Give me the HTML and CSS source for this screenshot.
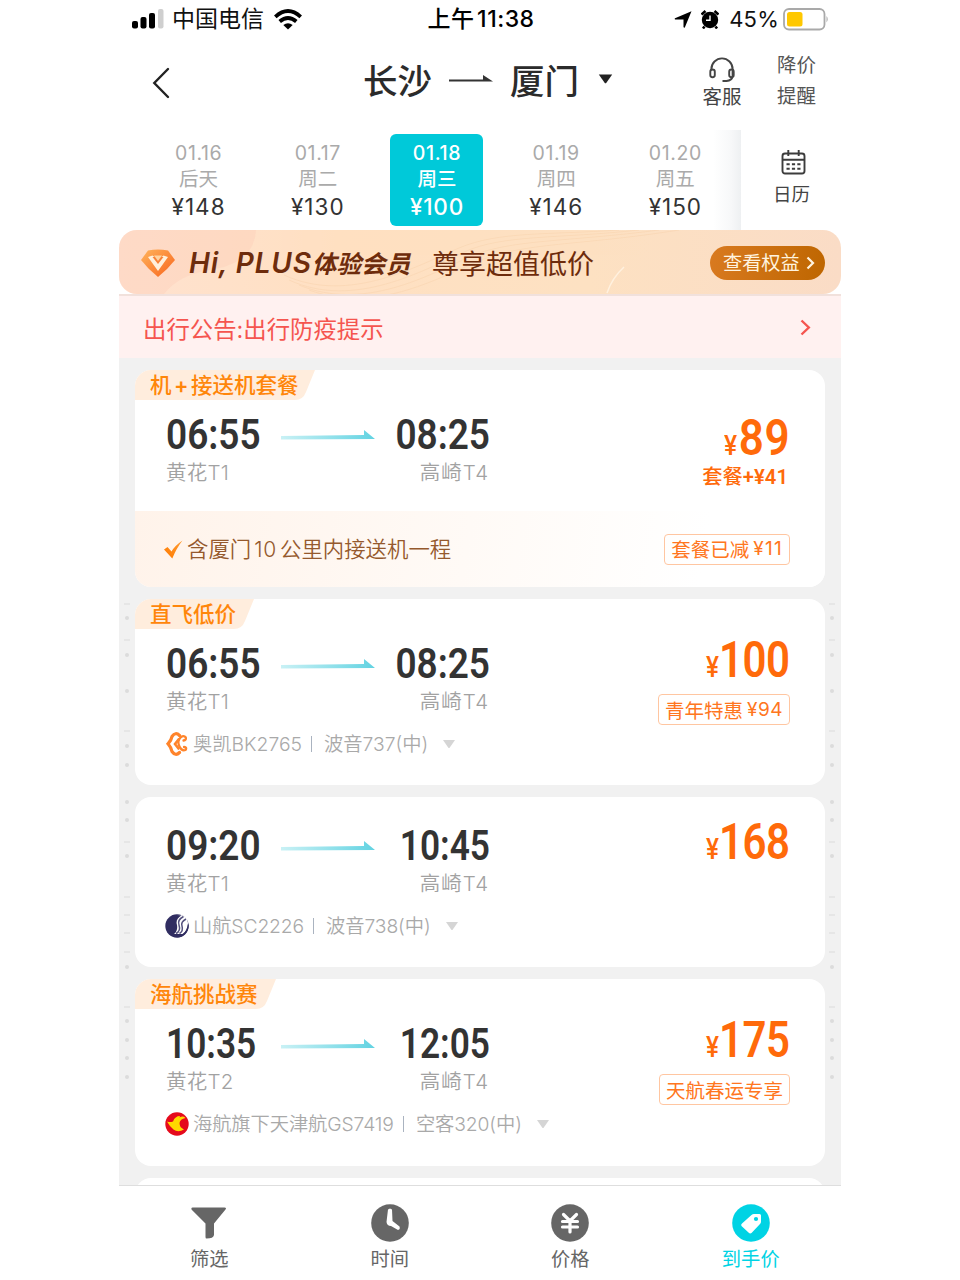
FILE: index.html
```html
<!DOCTYPE html>
<html lang="zh-CN">
<head>
<meta charset="utf-8">
<title>长沙 - 厦门</title>
<link rel="stylesheet" href="styles.css">
</head>
<body>
<svg class="defs" width="0" height="0">
  <defs>
    <linearGradient id="fly" x1="0" x2="1" y1="0" y2="0"><stop offset="0" stop-color="#c9f1f5"/><stop offset="1" stop-color="#62d3e2"/></linearGradient>
    <linearGradient id="gem" x1="0" x2="1" y1="0" y2="1"><stop offset="0" stop-color="#ffb45c"/><stop offset="1" stop-color="#f8641c"/></linearGradient>
    <linearGradient id="tick" x1="0" x2="1" y1="1" y2="0"><stop offset="0" stop-color="#ff7a00"/><stop offset="1" stop-color="#ff9c33"/></linearGradient>
    <symbol id="arrow" viewBox="0 0 94 12"><path d="M0 7 83 6V1L94 10 0 10.500Z" fill="url(#fly)"/></symbol>
    <symbol id="down" viewBox="0 0 12 9"><path d="M0 0H12L6.8 7.6Q6 8.6 5.2 7.6Z" fill="#d5d5d5"/></symbol>
  </defs>
</svg>
<div class="phone">
  <header class="status">
    <div class="status-left">
      <svg width="32" height="20" viewBox="0 0 32 20"><rect x="0" y="12" width="6" height="7.500" rx="2"/><rect x="8.500" y="8" width="6" height="11.500" rx="2"/><rect x="17" y="4" width="6" height="15.500" rx="2"/><rect x="26" y="0" width="5.500" height="19.500" rx="2" fill="#cfcfcf"/></svg>
      <span class="carrier">中国电信</span>
      <svg width="28" height="21" viewBox="0 0 28 21"><g fill="none" stroke="#000" stroke-width="3.800"><path d="M1.300 7.800Q14-3.700 26.700 7.800"/><path d="M5.700 12.500Q14 5.400 22.300 12.500"/></g><path d="M14 20.500 9.300 16Q14 12.600 18.700 16Z"/></svg>
    </div>
    <div class="clock">上午 11:38</div>
    <div class="status-right">
      <svg width="18" height="17" viewBox="0 0 18 17"><path d="M17.500.3 10.800 16.500Q10 17 9.500 16V8.500H1.200Q0 8 1 7.200Z"/></svg>
      <svg class="alarm" width="18" height="19" viewBox="0 0 18 19"><circle cx="9" cy="10" r="8.200"/><path d="M.5 4.500 4.500 1M17.500 4.500 13.500 1M3.500 16.500 2 18.500M14.500 16.500 16 18.500" stroke="#000" stroke-width="2.600"/><path d="M9 5.500V10.300H5" fill="none" stroke="#fff" stroke-width="1.400"/></svg>
      <span class="percent">45%</span>
      <svg width="47" height="23" viewBox="0 0 47 23"><rect x="1" y="1" width="40.500" height="20.500" rx="5" fill="#fff" stroke="#a9a9a9" stroke-width="1.800"/><rect x="4" y="4" width="15.500" height="14.500" rx="2.500" fill="#ffc800"/><path d="M43.500 8Q46 11.200 43.500 14.500Z" fill="#a9a9a9"/></svg>
    </div>
  </header>

  <nav class="nav">
    <svg class="back" width="18" height="32" viewBox="0 0 18 32"><path d="M16 2 2.300 16 16 30" fill="none" stroke="#222" stroke-width="2.400" stroke-linecap="round"/></svg>
    <div class="title">
      <span>长沙</span>
      <svg class="to" width="44" height="12" viewBox="0 0 44 12"><path d="M0 5.500H34V1L44 7.500H0Z" fill="#333"/></svg>
      <span>厦门</span>
      <svg class="caret" width="15" height="10" viewBox="0 0 15 10"><path d="M.8.500H14.200L8.400 8.700Q7.500 9.800 6.600 8.700Z" fill="#222"/></svg>
    </div>
    <div class="service">
      <svg width="28" height="27" viewBox="0 0 28 27"><g fill="none" stroke="#444" stroke-width="1.900"><path d="M3.400 14.500V13A10.600 10.600 0 0 1 24.600 13V20Q24 24.500 18.500 25H14.500"/><rect x="2.300" y="13.500" width="4.500" height="7.700" rx="2.200"/><rect x="21.200" y="13.500" width="4.500" height="7.700" rx="2.200"/></g></svg>
      <span>客服</span>
    </div>
    <div class="alert"><span>降价</span><span>提醒</span></div>
  </nav>

  <section class="dates">
    <div class="days">
      <div class="day"><span class="d">01.16</span><span class="w">后天</span><span class="p">¥148</span></div>
      <div class="day"><span class="d">01.17</span><span class="w">周二</span><span class="p">¥130</span></div>
      <div class="day active"><span class="d">01.18</span><span class="w">周三</span><span class="p">¥100</span></div>
      <div class="day"><span class="d">01.19</span><span class="w">周四</span><span class="p">¥146</span></div>
      <div class="day"><span class="d">01.20</span><span class="w">周五</span><span class="p">¥150</span></div>
    </div>
    <div class="calendar">
      <svg width="25" height="25" viewBox="0 0 25 25"><g fill="none" stroke="#3c3c3c" stroke-width="1.900"><rect x="1.500" y="3.500" width="22" height="20" rx="2.500"/><path d="M1.500 9.800H23.500M7.300 0V6M17.700 0V6"/><path d="M5.500 14.200H19.500M5.500 18.800H19.500" stroke-dasharray="3.200 2.200"/></g></svg>
      <span>日历</span>
    </div>
  </section>

  <section class="plus">
    <svg class="waves" width="722" height="64" viewBox="0 0 722 64"><path d="M0 0H137Q135 32 96 39Q60 44 45 64H0Z" fill="#fbc8b4" opacity=".3"/><g fill="none" stroke="#f6cda4" stroke-width=".8" opacity=".45"><path d="M165 45C230 75 300 35 340 18S430 5 500 0"/><path d="M170 50C235 80 305 40 345 22S440 9 520 0"/><path d="M180 55C245 82 310 45 350 27S450 12 540 0"/><path d="M190 60C255 84 315 50 360 31S460 16 560 0"/></g><path d="M488 63Q493 48 505 37" fill="none" stroke="#fff1df" stroke-width="1.500"/></svg>
    <svg class="gem" width="36" height="30" viewBox="0 0 36 30"><path d="M8 1.500Q18-.5 28 1.500L35 11Q28 20 18 28Q8 20 1 11Z" fill="url(#gem)"/><path d="M8 8 12.500 6.500 18 11 23.500 6.500 28 8 18 22Z" fill="#fff0dc"/><path d="M12.500 8H23.500L18 15Z" fill="#f98238"/><path d="M14 6.500H22L18 12Z" fill="#ffd3a0"/></svg>
    <span class="plus-name">Hi, PLUS<b>体验会员</b></span>
    <span class="plus-slogan">尊享超值低价</span>
    <span class="plus-btn">查看权益<svg width="9" height="14" viewBox="0 0 9 14"><path d="M1.500 1.500 7 7 1.500 12.500" fill="none" stroke="#fff3df" stroke-width="2.200"/></svg></span>
  </section>

  <section class="notice">
    <span>出行公告:出行防疫提示</span>
    <svg width="11" height="17" viewBox="0 0 11 17"><path d="M1.500 1.500 8.800 8.500 1.500 15.500" fill="none" stroke="#f5554f" stroke-width="2.400"/></svg>
  </section>

  <main class="list">
    <svg class="specks left" width="6" height="490" viewBox="0 0 6 490"><g stroke="#dcdcdc"><path d="M0 4H6M0 40H6M0 131H6M0 242H6M0 297H6M0 315H6M0 333H6M0 352H6M0 407H6" stroke-width="1.200"/><path d="M3 18v.1M3 55v.1M3 91v.1M3 146v.1M3 165v.1M3 202v.1M3 220v.1M3 256v.1M3 367v.1M3 421v.1M3 440v.1M3 458v.1M3 477v.1" stroke-width="4" stroke-linecap="round"/></g></svg>
    <svg class="specks right" width="6" height="490" viewBox="0 0 6 490"><g stroke="#dcdcdc"><path d="M0 4H6M0 40H6M0 131H6M0 242H6M0 297H6M0 315H6M0 333H6M0 352H6M0 407H6" stroke-width="1.200"/><path d="M3 18v.1M3 55v.1M3 91v.1M3 146v.1M3 165v.1M3 202v.1M3 220v.1M3 256v.1M3 367v.1M3 421v.1M3 440v.1M3 458v.1M3 477v.1" stroke-width="4" stroke-linecap="round"/></g></svg>

    <article class="card package">
      <div class="tag"><svg width="180" height="30" viewBox="0 0 180 30"><path d="M0 0H180L171 22Q168 30 160 30H0Z" fill="#ffeddd"/></svg><span>机<i>+</i>接送机套餐</span></div>
      <div class="body">
        <div class="route">
          <span class="time">06:55</span><svg class="fly"><use href="#arrow"/></svg><span class="time end">08:25</span>
          <span class="port">黄花T1</span><span class="port end">高崎T4</span>
        </div>
        <div class="fare"><div class="price"><i>¥</i><b>89</b></div><div class="extra">套餐<em>+¥41</em></div></div>
      </div>
      <div class="perk">
        <svg width="19" height="19" viewBox="0 0 19 19"><path d="M0 9.500 3.500 7 7.500 11.500Q11 5.500 18.500.5 12.500 8 8.300 18.500Z" fill="url(#tick)"/></svg>
        <span class="perk-text">含厦门<em>10</em>公里内接送机一程</span>
        <span class="badge">套餐已减<em>¥11</em></span>
      </div>
    </article>

    <article class="card direct">
      <div class="tag"><svg width="119" height="30" viewBox="0 0 119 30"><path d="M0 0H119L110 22Q107 30 99 30H0Z" fill="#ffeddd"/></svg><span>直飞低价</span></div>
      <div class="body">
        <div class="route">
          <span class="time">06:55</span><svg class="fly"><use href="#arrow"/></svg><span class="time end">08:25</span>
          <span class="port">黄花T1</span><span class="port end">高崎T4</span>
        </div>
        <div class="fare"><div class="price hundreds"><i>¥</i><b>100</b></div><div class="badge">青年特惠<em>¥94</em></div></div>
      </div>
      <div class="airline">
        <svg width="24" height="24" viewBox="0 0 24 24"><g fill="none" stroke="#ff842b" stroke-width="3.200" stroke-linecap="round"><path d="M14.500 3.500Q10.500-.5 7 4.500Q6.500 8 3 11.800Q6.500 16 7 19.500Q10.500 24.500 14.500 20.500"/><path d="M13.500 7.500 10 12 13.500 16.500" stroke-width="2.600"/><path d="M18.500 8.500Q21.500 8 20.800 5.500Q19 3 16 5Q12 9 14 13.500Q16.500 19.500 20.500 18Q22.500 15.500 19 15" stroke-width="2.300"/></g></svg>
        <span>奥凯BK2765</span><i class="bar"></i><span>波音737(中)</span><svg class="more" width="12" height="9"><use href="#down"/></svg>
      </div>
    </article>

    <article class="card plain">
      <div class="body">
        <div class="route">
          <span class="time">09:20</span><svg class="fly"><use href="#arrow"/></svg><span class="time end slim">10:45</span>
          <span class="port">黄花T1</span><span class="port end">高崎T4</span>
        </div>
        <div class="fare"><div class="price hundreds"><i>¥</i><b>168</b></div></div>
      </div>
      <div class="airline">
        <svg width="24" height="24" viewBox="0 0 24 24"><circle cx="12" cy="12" r="11.700" fill="#302d61"/><path d="M12 1.500Q18-.5 22 5L23 9Q22.500 17 17.500 20H9Q13 17 12 11Q10 5 17 1Z" fill="#fff"/><g fill="none" stroke="#55527e" stroke-width="1.500"><path d="M18.500 2.500Q12 6 14 11Q16 17 11 19.500M21 5Q15.500 8 17 12Q18.500 17 14.500 19.500"/></g><path d="M23 10Q22 17 17.500 20.500H8V22Q12 24 17 22.500Q24 18 23.700 11Z" fill="#302d61"/></svg>
        <span>山航SC2226</span><i class="bar"></i><span>波音738(中)</span><svg class="more" width="12" height="9"><use href="#down"/></svg>
      </div>
    </article>

    <article class="card hainan">
      <div class="tag"><svg width="141" height="30" viewBox="0 0 141 30"><path d="M0 0H141L132 22Q129 30 121 30H0Z" fill="#ffeddd"/></svg><span>海航挑战赛</span></div>
      <div class="body">
        <div class="route">
          <span class="time slim">10:35</span><svg class="fly"><use href="#arrow"/></svg><span class="time end slim">12:05</span>
          <span class="port">黄花T2</span><span class="port end">高崎T4</span>
        </div>
        <div class="fare"><div class="price hundreds"><i>¥</i><b>175</b></div><div class="badge">天航春运专享</div></div>
      </div>
      <div class="airline">
        <svg width="24" height="24" viewBox="0 0 24 24"><circle cx="12" cy="12" r="11.700" fill="#e50a1c"/><path d="M2 9.500Q5 10.500 8 9.500Q10 4 15 4L14.500 5.500Q18 3.500 20.500 6Q15 7 14.500 11Q14.500 15.500 19 17.500Q13 21 8.500 17.500Q5 15 2 9.500Z" fill="#ffd900"/><circle cx="19" cy="12" r="3.800" fill="#e50a1c"/></svg>
        <span>海航旗下天津航GS7419</span><i class="bar"></i><span>空客320(中)</span><svg class="more" width="12" height="9"><use href="#down"/></svg>
      </div>
    </article>

    <article class="card next"></article>
  </main>

  <footer class="tabs">
    <div class="tab"><svg width="38" height="38" viewBox="0 0 38 38"><path d="M2.500 3.500H34.500Q36.800 3.500 35.500 5.500L24 19.500V31Q23.500 34.500 16.500 34.500Q15.500 34.500 15.500 33V19.500L1.500 5.500Q.8 3.500 2.500 3.500Z" fill="#666"/></svg><span>筛选</span></div>
    <div class="tab"><svg width="38" height="38" viewBox="0 0 38 38"><circle cx="19" cy="19" r="18.800" fill="#666"/><path d="M19 4.500 21 5.500 21.500 17 28.500 22.500Q29.500 25.500 27 26L20 22Q16 22 15.500 18L17 5.500Z" fill="#fff"/></svg><span>时间</span></div>
    <div class="tab"><svg width="38" height="38" viewBox="0 0 38 38"><circle cx="19" cy="19" r="18.800" fill="#666"/><path d="M12.500 10.500 19 17 25.500 10.500M11.500 17.500H26.500M11.500 23H26.500M19 17V28" fill="none" stroke="#fff" stroke-width="3.200" stroke-linecap="round"/></svg><span>价格</span></div>
    <div class="tab on"><svg width="38" height="38" viewBox="0 0 38 38"><circle cx="19" cy="19" r="18.800" fill="#00d3e4"/><path d="M19.500 11Q20.500 10 22 10H27.500Q29 10 29 11.500V17.500Q29 19 28 20L19.500 29Q18 30 16.500 28.500L9.500 22Q8.500 20.500 10 19.500Z" fill="#fff"/><circle cx="24" cy="15" r="2.100" fill="#00d3e4"/></svg><span>到手价</span></div>
  </footer>
</div>
</body>
</html>
```
FILE: styles.css
```css
* { box-sizing: border-box; }
body {
  margin: 0;
  height: 1280px;
  overflow: hidden;
  background: #fff;
  font-family: Inter, "Noto Sans CJK SC", sans-serif;
  color: #333;
}
i, em { font-style: normal; }
svg { display: block; flex: none; }
.defs { position: absolute; }
.phone { width: 722px; height: 1280px; margin-left: 119px; display: flex; flex-direction: column; }
.phone span { white-space: nowrap; }

.status { display: grid; grid-template-columns: 1fr auto 1fr; height: 38px; padding: 0 11px 0 13px; color: #111; line-height: 38px; }
.status-left, .status-right { display: flex; align-items: center; }
.status-right { justify-content: flex-end; }
.carrier { margin: 0 10px 0 8px; font-size: 23px; }
.clock { font-size: 23px; font-weight: 500; letter-spacing: .5px; word-spacing: -4px; color: #000; }
.alarm { margin: 0 10px 0 9px; }
.percent { margin-right: 4px; font-size: 22px; letter-spacing: .2px; }

.nav { display: flex; height: 92px; align-items: flex-start; }
.back { margin: 29px 0 0 33px; }
.title { display: flex; align-items: center; height: 82px; margin-left: 193px; font-size: 34.500px; font-weight: 500; color: #2b2b2b; }
.title .to { margin: 2px 17px 0 17px; }
.title .caret { margin: -1px 0 0 19px; }
.service { display: flex; flex-direction: column; align-items: center; width: 40px; margin: 18px 0 0 89px; font-size: 19.500px; line-height: 28px; color: #444; }
.alert { display: flex; flex-direction: column; width: 40px; margin: 12px 0 0 35px; font-size: 19.500px; line-height: 31px; color: #555; }

.dates { display: flex; height: 100px; }
.days { display: grid; grid-template-columns: repeat(5, 119.2px); width: 622px; padding: 4px 0 0 20px; background: linear-gradient(90deg, transparent 594px, #f7f8f9 612px, #eef0f2 622px); }
.day { display: flex; flex-direction: column; align-items: center; justify-self: center; width: 93px; height: 92px; padding-top: 6px; border-radius: 6px; color: #aaa; }
.d { font-size: 19.500px; line-height: 26px; letter-spacing: .6px; }
.w { font-size: 19.500px; line-height: 26px; }
.p { font-size: 22.500px; line-height: 30px; letter-spacing: 1px; color: #333; }
.active { background: #00c9d9; color: #fff; }
.active .d, .active .w, .active .p { color: #fff; font-weight: 500; }
.active .p { letter-spacing: .8px; }
.calendar { display: flex; flex-direction: column; align-items: center; width: 100px; padding: 20px 0 0 4px; font-size: 18.500px; line-height: 28px; color: #444; }
.calendar span { margin: 5px 3px 0 0; }

.plus { position: relative; display: flex; align-items: center; height: 64px; padding: 1px 16px 0 21px; border-radius: 18px; background: linear-gradient(90deg, #ffe2d0, #ffe0c2 30%, #fde1c2 65%, #fadcc6); overflow: hidden; color: #6e2c0c; }
.waves { position: absolute; left: 0; top: 0; }
.gem { position: relative; margin-top: 2px; }
.plus-name { position: relative; margin-left: 13px; width: 225px; font-size: 28px; font-weight: 600; font-style: italic; letter-spacing: .8px; }
.plus-name b { font-size: 24.500px; font-weight: 700; letter-spacing: .2px; }
.plus-slogan { position: relative; margin-left: 18px; font-size: 27px; }
.plus-btn { position: relative; display: flex; align-items: center; gap: 6px; width: 115px; height: 34px; margin-left: auto; padding-left: 13px; border-radius: 17px; background: linear-gradient(100deg, #d97a20, #be6600); color: #fff3df; font-size: 19.200px; line-height: 34px; }

.notice { display: flex; align-items: center; justify-content: space-between; height: 64px; padding: 1px 30px 0 24px; border-top: 2px solid #f1e1dc; background: #fff1f0; color: #f5554f; font-size: 23.400px; }

.list { position: relative; display: flex; flex-direction: column; flex: 1; min-height: 0; overflow: hidden; padding: 12px 16px 0; background: #f1f1f1; }
.specks { position: absolute; top: 242px; }
.specks.left { left: 5px; }
.specks.right { right: 6px; }
.card { flex: none; margin-bottom: 12px; border-radius: 16px; background: #fff; overflow: hidden; }
.package { height: 217px; margin-bottom: 12px; }
.direct { height: 186px; }
.plain { height: 170px; padding-top: 28px; }
.hainan { height: 187px; }
.next { height: 60px; }
.tag { display: grid; height: 30px; font-size: 21.500px; font-weight: 500; line-height: 30px; color: #ff860a; }
.tag > * { grid-area: 1 / 1; }
.tag span { padding-left: 15px; }
.tag i { margin: 0 2.500px; font-weight: 600; }
.body { display: flex; justify-content: space-between; height: 95px; padding: 14px 35px 0 31px; }
.plain .body { padding-top: 0; height: 81px; }
.route { display: grid; grid-template-columns: 115px 94px 115px; grid-template-rows: 40px 36px; align-items: center; height: 76px; }
.time { display: inline-block; font-family: Roboto, sans-serif; font-size: 43px; font-weight: 600; line-height: 40px; color: #333; transform: scaleX(.86); transform-origin: left; }
.time.end { justify-self: end; transform-origin: right; }
.time.slim { transform: scaleX(.82); }
.fly { width: 94px; height: 12px; margin-top: 1px; }
.port { font-size: 20.500px; line-height: 36px; font-weight: 350; letter-spacing: .2px; color: #a2a2a2; padding-top: 1px; }
.port.end { grid-column: 3; justify-self: end; padding-right: 1px; letter-spacing: .9px; }
.fare { display: flex; flex-direction: column; align-items: flex-end; margin-top: -3px; }
.package .fare { margin-top: 4px; }
.price { display: flex; align-items: baseline; height: 40px; font-family: Roboto, sans-serif; line-height: 40px; color: #ff6a0a; transform: scaleX(.88); transform-origin: right; }
.price i { margin-right: 2px; font-size: 28px; font-weight: 500; }
.price b { font-size: 50px; font-weight: 600; letter-spacing: .5px; }
.hundreds { transform: scaleX(.84); }
.hundreds i { margin-right: 0; font-size: 29px; }
.hundreds b { letter-spacing: -.5px; }
.extra { margin-top: 3px; font-size: 20.300px; font-weight: 500; line-height: 32px; color: #ff6a0a; letter-spacing: 0; padding-right: 2px; }
.extra em { font-family: Roboto, sans-serif; font-weight: 600; }
.badge { display: flex; align-items: center; height: 31px; padding: 0 6px 1px; border: 1.500px solid #ffc6a1; border-radius: 4px; color: #ff7620; font-size: 19.500px; white-space: nowrap; }
.fare .badge { margin-top: 14px; }
.badge em { margin-left: 4px; font-size: 19px; letter-spacing: .5px; }
.perk .badge em { letter-spacing: 1.300px; }
.perk { display: flex; align-items: center; height: 76px; margin-top: 16px; padding: 0 35px 0 29px; background: linear-gradient(100deg, #fff3ea, #fffaf6 48%, #fff 82%); color: #95592d; font-size: 21.400px; }
.perk-text { margin: -4px 0 0 4px; font-weight: 350; }
.perk-text em { margin: 0 3px; font-size: 21px; letter-spacing: .8px; }
.perk .badge { margin-left: auto; }
.airline { display: flex; align-items: center; height: 24px; margin: 8px 0 0 30px; font-size: 19.300px; font-weight: 350; line-height: 24px; color: #a9a9a9; }
.airline span { margin-top: -1px; }
.airline span:first-of-type { margin-left: 4px; }
.bar { width: 1px; height: 16px; margin: 0 12px 0 9px; background: #aab3c0; }
.more { margin-left: 15px; }
.plain .airline { letter-spacing: -.1px; }
.hainan .airline { letter-spacing: -.1px; }

.tabs { display: grid; grid-template-columns: repeat(4, 1fr); height: 95px; border-top: 1.500px solid #dedede; background: #fff; }
.tab { display: flex; flex-direction: column; align-items: center; padding-top: 18px; color: #666; font-size: 19.300px; line-height: 30px; }
.tab span { margin-top: 2px; }
.on { color: #00d3e4; }
```
